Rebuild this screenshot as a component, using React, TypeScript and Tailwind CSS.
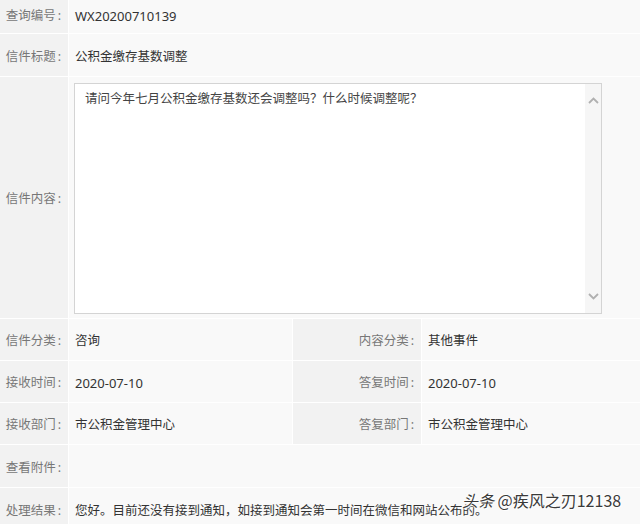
import React from "react";

const font = { fontFamily: '"Noto Sans", "Noto Sans CJK SC", sans-serif' };

function Label({ children, first }: { children: React.ReactNode; first?: boolean }) {
  return (
    <div
      className={
        "bg-[#f2f2f2] flex items-center justify-end pr-[7px] text-[12.5px] text-[#777] whitespace-nowrap " +
        (first ? "" : "pt-[4px]")
      }
    >
      {children}
      <span className="ml-[2px]">:</span>
    </div>
  );
}

function Value({
  children,
  span,
  num,
  first,
}: {
  children?: React.ReactNode;
  span?: boolean;
  num?: boolean;
  first?: boolean;
}) {
  return (
    <div
      className={
        "bg-[#f9f9f9] flex items-center pl-[6px] text-[#333] whitespace-nowrap " +
        (num ? "text-[13px] " : "text-[12.5px] ") +
        (span ? "col-span-3 " : "") +
        (first ? "" : "pt-[4px]")
      }
    >
      {children}
    </div>
  );
}

export default function App() {
  return (
    <div className="relative w-[640px] h-[524px] overflow-hidden bg-white" style={font}>
      <div className="grid grid-cols-[68px_223px_128px_1fr] grid-rows-[33px_42px_241px_41px_41px_41px_42px_42px] gap-px bg-white">
        <Label first>查询编号</Label>
        <Value span num first>WX20200710139</Value>

        <Label>信件标题</Label>
        <Value span>公积金缴存基数调整</Value>

        <Label>信件内容</Label>
        <div className="col-span-3 bg-[#f9f9f9] pl-[5px] pt-[6px] pb-[4px] pr-[38px] flex">
          <div className="flex-1 flex border border-[#d4d4d4] bg-white">
            <div
              className="flex-1 pl-[10px] pt-[6px] text-[12.5px] text-[#444]"
              style={{ fontFamily: '"Liberation Serif", "Noto Sans CJK SC", serif' }}
            >
              请问今年七月公积金缴存基数还会调整吗？什么时候调整呢？
            </div>
            <div className="w-[16px] bg-[#f6f6f6] flex flex-col items-center justify-between py-[13px]">
              <svg width="11" height="7" viewBox="0 0 11 7">
                <path d="M1 6 L5.5 1.5 L10 6" fill="none" stroke="#b0b0b0" strokeWidth="1.8" />
              </svg>
              <svg width="11" height="7" viewBox="0 0 11 7">
                <path d="M1 1 L5.5 5.5 L10 1" fill="none" stroke="#b0b0b0" strokeWidth="1.8" />
              </svg>
            </div>
          </div>
        </div>

        <Label>信件分类</Label>
        <Value>咨询</Value>
        <Label>内容分类</Label>
        <Value>其他事件</Value>

        <Label>接收时间</Label>
        <Value num>2020-07-10</Value>
        <Label>答复时间</Label>
        <Value num>2020-07-10</Value>

        <Label>接收部门</Label>
        <Value>市公积金管理中心</Value>
        <Label>答复部门</Label>
        <Value>市公积金管理中心</Value>

        <Label>查看附件</Label>
        <Value span></Value>

        <Label>处理结果</Label>
        <Value span>您好。目前还没有接到通知，如接到通知会第一时间在微信和网站公布的。</Value>
      </div>

      <div
        className="absolute left-[462px] top-[492px] text-[16px] text-[#3a3a3a] whitespace-nowrap leading-none"
        style={{
          fontFamily: '"Noto Sans CJK SC", sans-serif',
          textShadow:
            "0 0 2px #fff, 0 0 2px #fff, 1px 1px 1px #fff, -1px -1px 1px #fff",
        }}
      >
        <span className="italic">头条</span> @疾风之刃12138
      </div>
    </div>
  );
}
